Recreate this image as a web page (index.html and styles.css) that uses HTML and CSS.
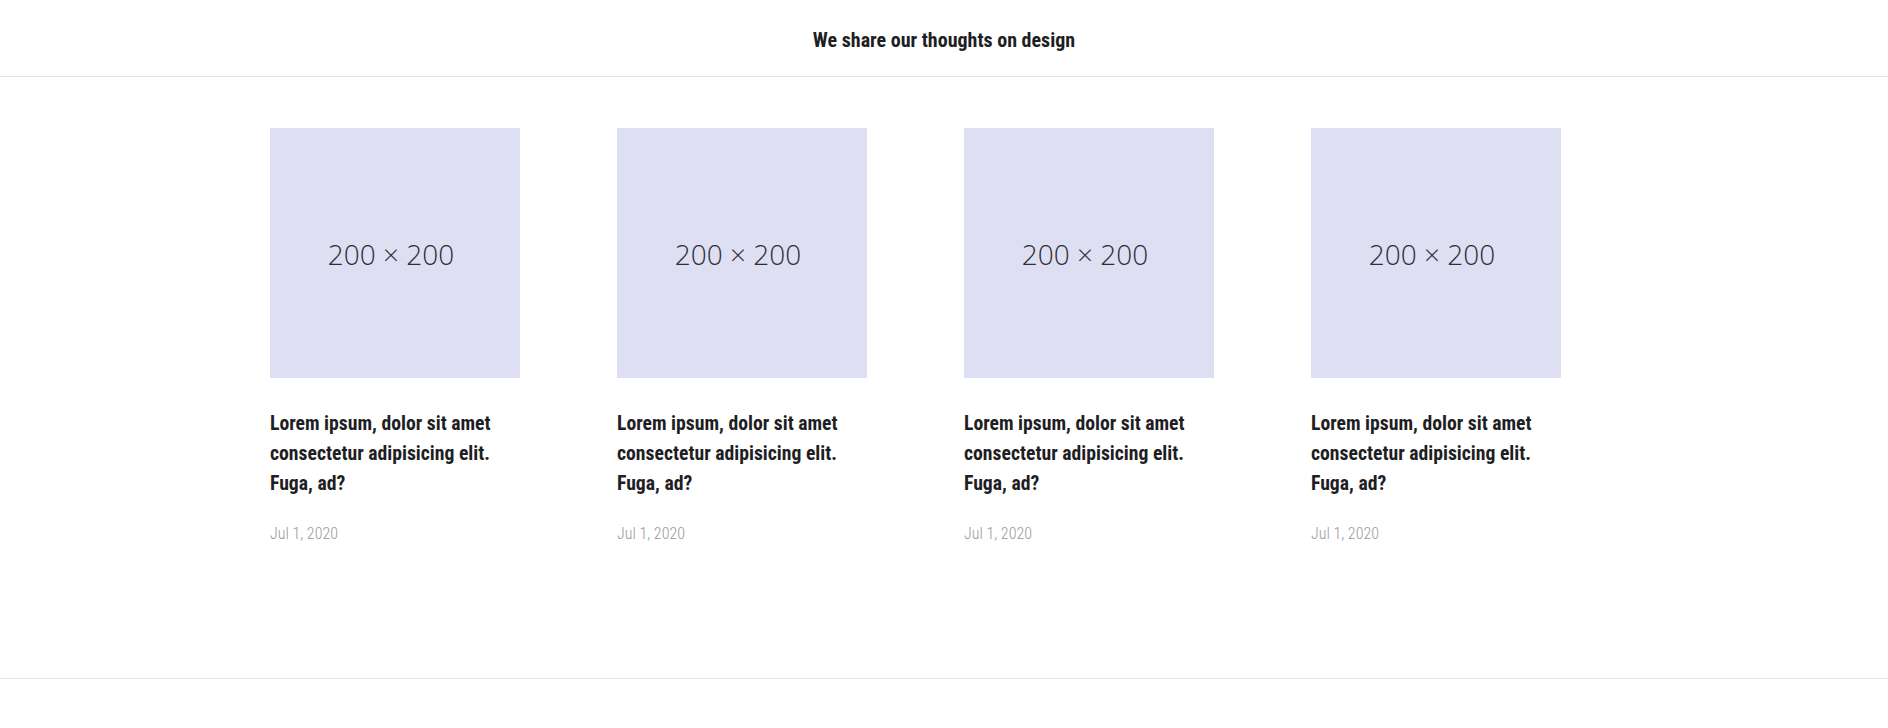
FILE: index.html
```html
<!DOCTYPE html>
<html lang="en">
<head>
<meta charset="utf-8">
<title>Blog</title>
<link rel="stylesheet" href="styles.css">
</head>
<body>
<header class="site-header">
  <h1 class="site-title">We share our thoughts on design</h1>
</header>
<main class="posts">
  <div class="posts-grid">
    <article class="post">
      <div class="thumb"><span>200 × 200</span></div>
      <h2 class="post-title">Lorem ipsum, dolor sit amet consectetur adipisicing elit. Fuga, ad?</h2>
      <p class="post-date">Jul 1, 2020</p>
    </article>
    <article class="post">
      <div class="thumb"><span>200 × 200</span></div>
      <h2 class="post-title">Lorem ipsum, dolor sit amet consectetur adipisicing elit. Fuga, ad?</h2>
      <p class="post-date">Jul 1, 2020</p>
    </article>
    <article class="post">
      <div class="thumb"><span>200 × 200</span></div>
      <h2 class="post-title">Lorem ipsum, dolor sit amet consectetur adipisicing elit. Fuga, ad?</h2>
      <p class="post-date">Jul 1, 2020</p>
    </article>
    <article class="post">
      <div class="thumb"><span>200 × 200</span></div>
      <h2 class="post-title">Lorem ipsum, dolor sit amet consectetur adipisicing elit. Fuga, ad?</h2>
      <p class="post-date">Jul 1, 2020</p>
    </article>
  </div>
</main>
</body>
</html>
```
FILE: styles.css
```css
* { box-sizing: border-box; }
html, body { margin: 0; padding: 0; background: #fff; }
body {
  font-family: "Roboto Condensed", Roboto, "Liberation Sans", sans-serif;
  font-stretch: condensed;
  color: #1e1e24;
}
.site-header {
  height: 77px;
  border-bottom: 1px solid #e4e4e4;
  display: flex;
  align-items: center;
  justify-content: center;
}
.site-title {
  margin: 0;
  font-size: 20px;
  font-weight: 700;
  line-height: 1;
  padding-top: 4px;
}
.posts {
  border-bottom: 1px solid #e4e4e4;
  height: 602px;
  padding-top: 51px;
}
.posts-grid {
  width: 1388px;
  margin: 0 auto 0 250px;
  display: grid;
  grid-template-columns: repeat(4, 1fr);
}
.post { padding-left: 20px; }
.thumb {
  width: 250px;
  height: 250px;
  background: #dedff3;
  display: flex;
  align-items: center;
  justify-content: center;
  padding-right: 8px;
}
.thumb span {
  font-family: "Open Sans", sans-serif;
  font-stretch: normal;
  font-size: 28px;
  font-weight: 300;
  color: #2e2e36;
  padding-top: 2px;
}
.post-title {
  width: 250px;
  margin: 31px 0 0;
  font-size: 19.7px;
  line-height: 30px;
  font-weight: 700;
}
.post-date {
  margin: 23px 0 0;
  font-size: 16px;
  line-height: 24px;
  font-weight: 300;
  color: #9a989c;
}
```
